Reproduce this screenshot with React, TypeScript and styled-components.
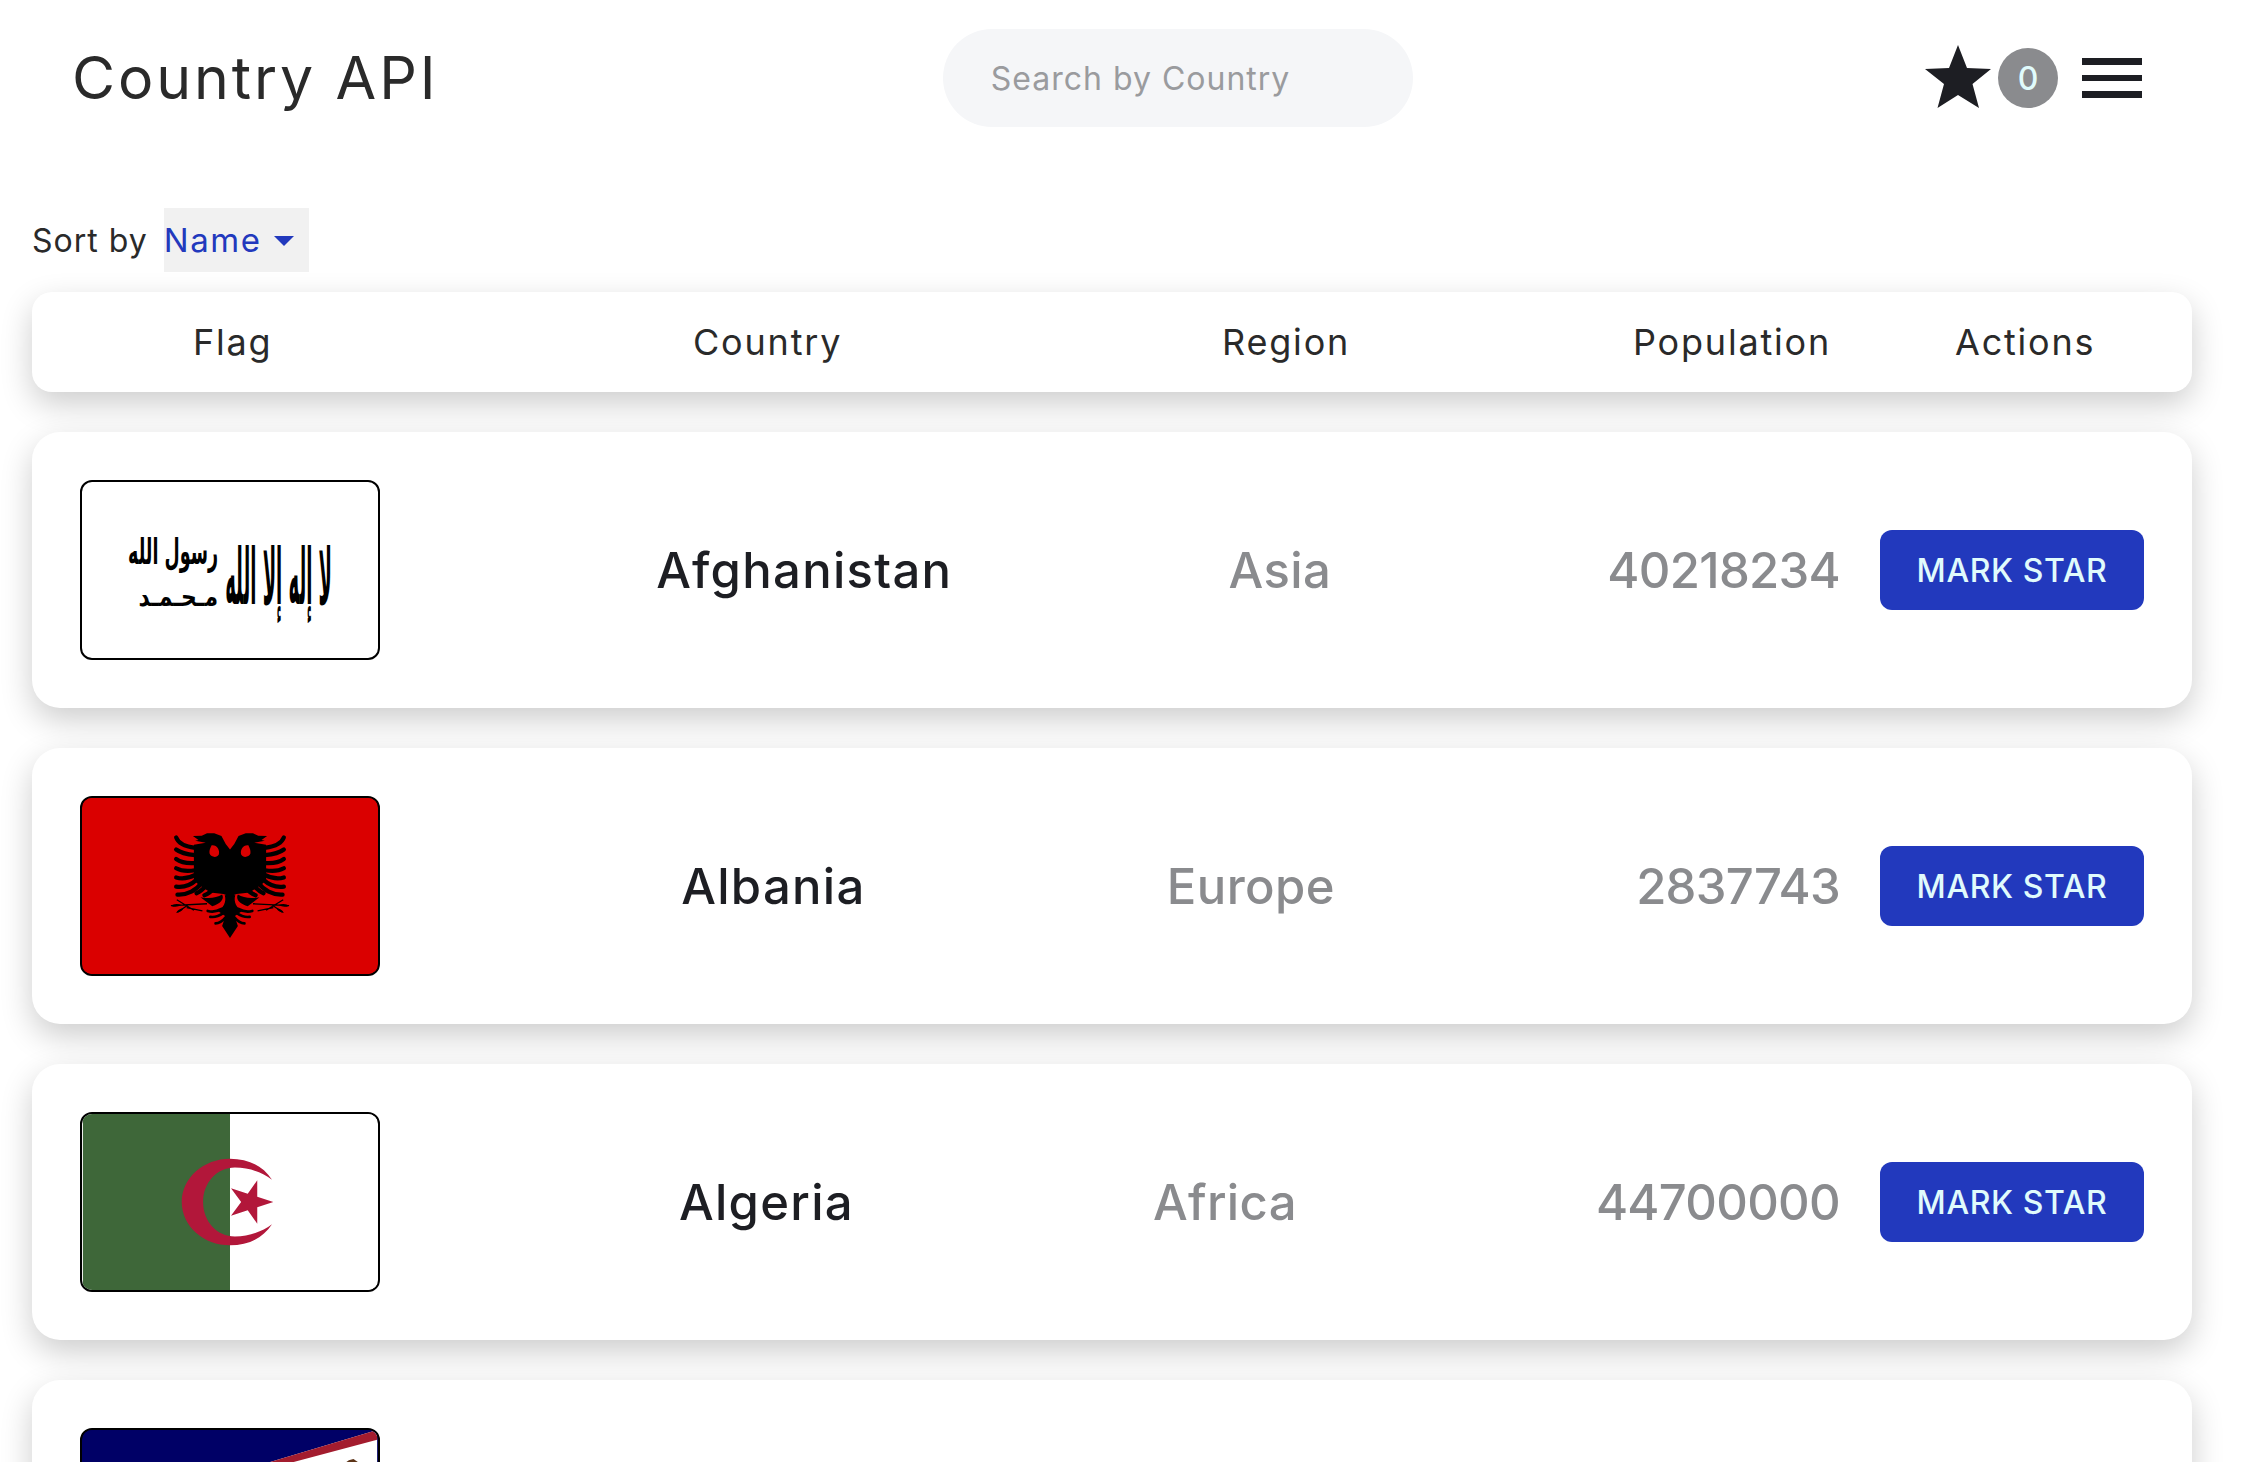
import React from 'react';
import styled, { createGlobalStyle } from 'styled-components';

const GlobalStyle = createGlobalStyle`
  html, body {
    margin: 0;
    padding: 0;
    height: 100%;
    overflow: hidden;
    background: #ffffff;
  }
  body {
    font-family: Inter, "Noto Sans", sans-serif;
    color: #1d1e23;
  }
`;

const Page = styled.div`
  height: 1462px;
  overflow: hidden;
`;

const Nav = styled.nav`
  display: flex;
  align-items: center;
  justify-content: space-between;
  padding: 29px 102px 0 72px;
`;

const Title = styled.h1`
  margin: -2px 0 0;
  font-size: 59px;
  font-weight: 400;
  letter-spacing: 2.9px;
  color: #2a2a2a;
`;

const Search = styled.input`
  box-sizing: border-box;
  width: 470px;
  height: 98px;
  margin-right: 8px;
  padding: 0 48px;
  border: none;
  border-radius: 49px;
  background: #f5f6f8;
  font-family: inherit;
  font-size: 32px;
  letter-spacing: 1px;
  outline: none;

  &::placeholder {
    color: #9a9b9e;
  }
`;

const NavRight = styled.div`
  display: flex;
  align-items: center;
`;

const StarButton = styled.div`
  display: flex;
  align-items: flex-end;
  gap: 7px;
  margin-top: -3px;
`;

const Badge = styled.span`
  display: flex;
  align-items: center;
  justify-content: center;
  width: 60px;
  height: 60px;
  border-radius: 50%;
  background: #8a8b8e;
  color: #e0fbfc;
  font-size: 32px;
  font-weight: 500;
`;

const Burger = styled.div`
  display: flex;
  flex-direction: column;
  gap: 10px;
  margin-left: 24px;
  width: 60px;
`;

const BurgerBar = styled.span`
  display: block;
  height: 6.5px;
  background: #1d1e23;
`;

const SortRow = styled.div`
  display: flex;
  align-items: center;
  gap: 16px;
  margin: 81px 32px 20px;
  font-size: 32px;
`;

const SortLabel = styled.span`
  color: #2a2a2a;
  letter-spacing: 1px;
`;

const SortSelect = styled.div`
  display: flex;
  align-items: center;
  gap: 12px;
  height: 64px;
  padding: 0 15px 0 0;
  background: #f1f1f1;
  color: #2239bd;
  font-size: 33px;
  letter-spacing: 1.6px;
`;

const Caret = styled.span`
  width: 0;
  height: 0;
  margin-top: 2px;
  border-left: 10px solid transparent;
  border-right: 10px solid transparent;
  border-top: 10px solid #2239bd;
`;

const Card = styled.div`
  background: #ffffff;
  box-shadow: 0 12px 32px rgba(0, 0, 0, 0.2);
  margin: 0 52px 40px 32px;
`;

const HeaderCard = styled(Card)`
  display: grid;
  grid-template-columns: 500px 529px 411px 322px auto;
  align-items: center;
  height: 100px;
  padding-left: 161px;
  box-sizing: border-box;
  border-radius: 20px;
  font-size: 36px;
  letter-spacing: 1.8px;
  color: #2a2a2a;
`;

const RowCard = styled(Card)`
  display: flex;
  align-items: center;
  padding: 48px;
  border-radius: 28px;
`;

const RowInfo = styled.div`
  flex: 1;
  display: flex;
  align-items: center;
  justify-content: space-between;
`;

const FlagBox = styled.div<{ $bg: string }>`
  box-sizing: border-box;
  width: 300px;
  height: 180px;
  border: 2px solid #000000;
  border-radius: 12px;
  overflow: hidden;
  background: ${(p) => p.$bg};

  svg {
    display: block;
    width: 100%;
    height: 100%;
  }
`;

const CountryName = styled.span`
  font-size: 49px;
  font-weight: 500;
  letter-spacing: 1.3px;
  color: #1d1e23;
`;

const RegionName = styled.span`
  font-size: 49px;
  font-weight: 500;
  letter-spacing: 0.4px;
  color: #8a8b8e;
`;

const Population = styled.span`
  font-size: 49px;
  font-weight: 500;
  letter-spacing: -0.7px;
  color: #8a8b8e;
`;

const MarkButton = styled.button`
  width: 264px;
  height: 80px;
  margin-left: 40px;
  padding: 0;
  border: none;
  border-radius: 12px;
  background: #2239bd;
  color: #e0fbfc;
  font-family: inherit;
  font-size: 32px;
  font-weight: 500;
  letter-spacing: 0.6px;
`;

const AfghanistanFlag = () => (
  <svg viewBox="0 0 296 176">
    <g fontFamily='"DejaVu Sans", sans-serif' fontWeight="700" fill="#000" direction="rtl">
      <text x="0" y="0" textAnchor="start" fontSize="30" transform="translate(250 122) scale(0.6 2.6)">
        لا إله إلا الله
      </text>
      <text x="0" y="0" textAnchor="start" fontSize="24" transform="translate(136 82) scale(0.73 1.5)">
        رسول الله
      </text>
      <text x="0" y="0" textAnchor="start" fontSize="22" transform="translate(136 124) scale(1 1.2)">
        مـحـمـد
      </text>
    </g>
  </svg>
);

const wingFeathers = [
  'M346 170C352 188 375 198 404 202',
  'M346 207C360 218 380 222 404 224',
  'M346 236C360 246 380 250 404 248',
  'M346 264C360 272 382 274 404 270',
  'M346 292C365 298 385 294 404 284',
  'M346 320C370 324 392 314 410 298',
  'M350 344C380 346 408 330 424 308',
  'M408 340C418 336 430 326 440 314',
  'M432 346C444 342 456 332 466 318',
];

const tailFeathers = [
  'M442 394C456 398 470 396 484 388',
  'M450 412C462 414 476 410 490 400',
  'M466 432C476 432 488 424 498 412',
];

const EagleHalf = () => (
  <g>
    <path d="M510 207L497 190 484 166 462 157 440 157 424 165 397 166 414 178 404 180 436 186 400 192 400 300 412 312 450 338 490 342 510 350Z" fill="#000" />
    <path d="M454 194C470 192 480 208 476 222 470 234 452 230 448 220 446 208 452 200 454 194Z" fill="#da0000" />
    <path d="M510 344L494 346C500 366 490 388 470 392L496 410 486 440 510 476Z" fill="#000" />
    <path d="M420 352C446 358 470 354 486 344 494 358 480 372 456 380Z" fill="#000" />
    {wingFeathers.map((d) => (
      <path key={d} d={d} fill="none" stroke="#000" strokeWidth="13" strokeLinecap="round" />
    ))}
    {tailFeathers.map((d) => (
      <path key={d} d={d} fill="none" stroke="#000" strokeWidth="8" strokeLinecap="round" />
    ))}
    <path d="M330 378L440 372M348 360L400 392M350 398L382 376M378 384L426 394" fill="none" stroke="#000" strokeWidth="4" />
    <path d="M330 378Q345 368 362 376Q345 386 330 378ZM346 400Q352 388 368 386Q364 398 346 400Z" fill="#000" />
  </g>
);

const AlbaniaFlag = () => (
  <svg viewBox="62 50 896 536">
    <rect x="62" y="50" width="896" height="536" fill="#da0000" />
    <EagleHalf />
    <g transform="matrix(-1 0 0 1 1020 0)">
      <EagleHalf />
    </g>
  </svg>
);

const AlgeriaFlag = () => (
  <svg viewBox="62 68 896 536">
    <rect x="62" y="68" width="448" height="536" fill="#3e6739" />
    <rect x="510" y="68" width="448" height="536" fill="#ffffff" />
    <path
      d="M638 268C610 225 565 204 510 204C430 204 363 262 363 336C363 410 430 468 510 468C565 468 610 447 638 404C610 425 570 441 525 441C470 441 428 395 428 336C428 277 470 231 525 231C570 231 610 247 638 268Z"
      fill="#b2173a"
    />
    <polygon points="642,336 593,352 593,402 564,361 513,378 544,336 513,294 564,311 593,270 593,320" fill="#b2173a" />
  </svg>
);

const SamoaFlag = () => (
  <svg viewBox="62 1014 896 536">
    <rect x="62" y="1014" width="896" height="536" fill="#000066" />
    <polygon points="958,1014 958,1550 62,1282" fill="#ffffff" />
    <path d="M62 1282L958 1014V1044L62 1282Z" fill="#a31c2e" />
    <path d="M62 1282L958 1550V1520L62 1282Z" fill="#a31c2e" />
    <path d="M858 1116L872 1106 886 1102 900 1112 900 1160 858 1160Z" fill="#5c3317" />
  </svg>
);

const countries = [
  { name: 'Afghanistan', region: 'Asia', population: 40218234, flagBg: '#ffffff', Flag: AfghanistanFlag },
  { name: 'Albania', region: 'Europe', population: 2837743, flagBg: '#da0000', Flag: AlbaniaFlag },
  { name: 'Algeria', region: 'Africa', population: 44700000, flagBg: '#ffffff', Flag: AlgeriaFlag },
];

const StarIcon = () => (
  <svg width="66" height="63" viewBox="0 0 66 63">
    <polygon points="33,0 42,23 66,24 47.5,39 54,63 33,50 12.5,63 19,39 0,24 24,23" fill="#1d1e23" />
  </svg>
);

export default function App() {
  return (
    <Page>
      <GlobalStyle />
      <Nav>
        <Title>Country API</Title>
        <Search placeholder="Search by Country" />
        <NavRight>
          <StarButton>
            <StarIcon />
            <Badge>0</Badge>
          </StarButton>
          <Burger>
            <BurgerBar />
            <BurgerBar />
            <BurgerBar />
          </Burger>
        </NavRight>
      </Nav>
      <SortRow>
        <SortLabel>Sort by</SortLabel>
        <SortSelect>
          Name
          <Caret />
        </SortSelect>
      </SortRow>
      <HeaderCard>
        <span>Flag</span>
        <span>Country</span>
        <span>Region</span>
        <span>Population</span>
        <span>Actions</span>
      </HeaderCard>
      {countries.map(({ name, region, population, flagBg, Flag }) => (
        <RowCard key={name}>
          <RowInfo>
            <FlagBox $bg={flagBg}>
              <Flag />
            </FlagBox>
            <CountryName>{name}</CountryName>
            <RegionName>{region}</RegionName>
            <Population>{population}</Population>
          </RowInfo>
          <MarkButton>MARK STAR</MarkButton>
        </RowCard>
      ))}
      {/* next row only shows its flag before the fold */}
      <RowCard>
        <RowInfo>
          <FlagBox $bg="#000066">
            <SamoaFlag />
          </FlagBox>
        </RowInfo>
      </RowCard>
    </Page>
  );
}
